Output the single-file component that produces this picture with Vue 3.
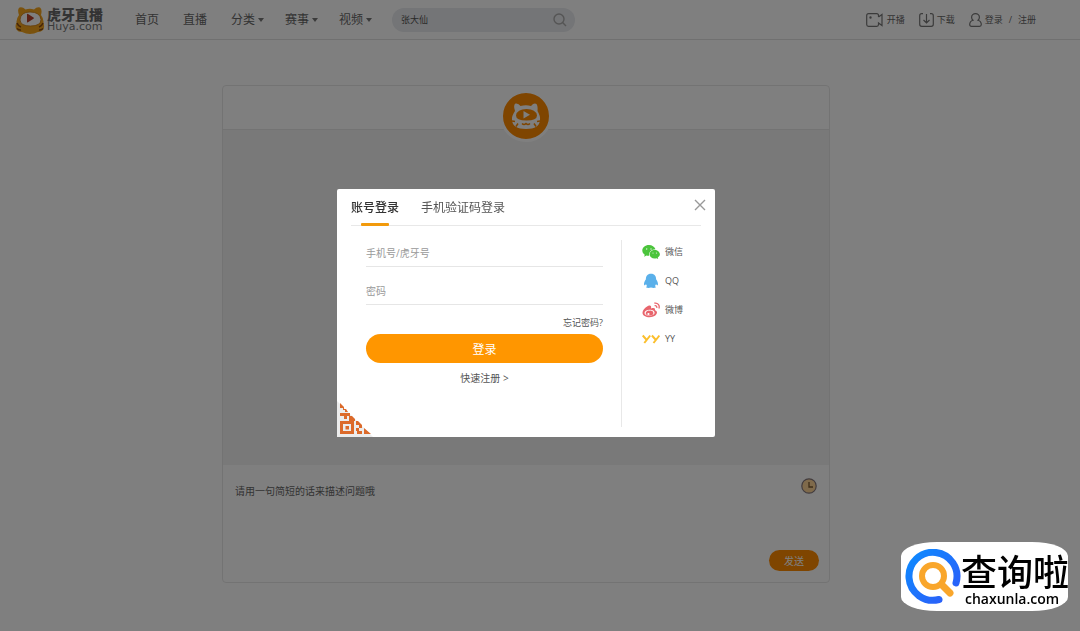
<template>
	<div class="page">
		<header class="header">
			<a class="logo" href="#">
				<svg class="logo-face" viewBox="0 0 30 28" aria-hidden="true">
					<path fill="#f5a51c" d="M4 9Q2 3 4.500 1.500Q7.500 .5 10.500 3.500Q15 2 19 3.500Q22 .5 25 1.500Q27.500 3 26 9Q29 13 28.500 17Q30 21 28 24Q26 26 23 26Q15 30 7 26Q3 26 1.500 23.500Q-.5 20 1.500 17Q1 13 4 9Z" />
					<path fill="#fff" stroke="#c97a14" stroke-width=".8" d="M5 14Q5.500 6 15 6Q25 6 26 13.500Q26 20 15.500 20Q5.500 20 5 14Z" />
					<path fill="#b8402a" d="M12 8.500Q12 7.500 13 8L18.500 11.500Q19.500 12 18.500 12.700L13 16.300Q12 16.800 12 15.800Z" />
					<path fill="none" stroke="#8a4b12" stroke-width="1.500" d="M2 17q1 3 4 4M2 22.500q2 2 4 1.500M28 17q-1 3 -4 4M28 22.500q-2 2 -4 1.500" />
				</svg>
				<span class="logo-text">
					<strong>虎牙直播</strong>
					<em>Huya.com</em>
				</span>
			</a>

			<nav class="nav">
				<a v-for="item in navItems" :key="item.name" href="#" :class="{ 'has-arrow': item.arrow }">{{ item.name }}</a>
			</nav>

			<form class="search" @submit.prevent>
				<input v-model="keyword" type="text" aria-label="搜索" placeholder="张大仙">
				<button type="submit" aria-label="搜索">
					<svg viewBox="0 0 14 14"><circle cx="6" cy="6" r="5" /><path d="M9.6 9.6 L13 13" /></svg>
				</button>
			</form>

			<div class="user-bar">
				<a href="#">
					<svg class="ico-video" viewBox="0 0 18 14">
						<path d="M12.5 4V2.5Q12.5 .7 10.7 .7H2.5Q.7 .7 .7 2.5V11.5Q.7 13.3 2.5 13.3H10.7Q12.5 13.3 12.5 11.5V10L16 12.5V1.5L12.5 4" />
						<circle cx="4.5" cy="4.5" r=".6" />
					</svg>
					开播
				</a>
				<a href="#">
					<svg class="ico-down" viewBox="0 0 15 14">
						<path d="M4 .7H2.7Q.7 .7 .7 2.7V11.3Q.7 13.3 2.7 13.3H12.3Q14.3 13.3 14.3 11.3V2.7Q14.3 .7 12.3 .7H11M7.5 1V10M4.5 7L7.5 10L10.5 7" />
					</svg>
					下载
				</a>
				<div class="login-links">
					<svg class="ico-user" viewBox="0 0 13 14">
						<path d="M4 7.2Q2.6 6 2.6 4.2A3.8 3.5 0 0 1 10.4 4.2Q10.4 6 9 7.2Q12.3 8.2 12.3 11.5Q12.3 13.3 10.5 13.3H2.5Q.7 13.3 .7 11.5Q.7 8.2 4 7.2Z" />
					</svg>
					<a href="#">登录</a>
					<span class="slash">/</span>
					<a href="#">注册</a>
				</div>
			</div>
		</header>

		<main class="main">
			<section class="chat">
				<div class="chat-head">
					<div class="avatar">
						<svg viewBox="0 0 30 28">
							<path fill="#fff" d="M4 9Q2 3 4.500 1.500Q7.500 1 9.500 4Q15 2.500 20 4Q23 .5 25.500 2Q27 4 26.500 9Q29.500 14 29 18Q28.500 27 15 27Q1.500 27 1 18Q.5 14 4 9Z" />
							<path fill="#ff8a00" d="M5 13.500Q6 7 15.500 7Q25 7 26 13.500Q26 18.500 15.500 18.500Q5 18.500 5 13.500Z" />
							<path fill="#fff" d="M12.500 9L19 12.800L12.500 16.500Z" />
							<path fill="none" stroke="#ff8a00" stroke-width="1.500" d="M1 19l3 .5M5 24.500l2 -3M29 19l-3 .5M25 24.500l-2 -3M11 21.500q2 2 4 0q2 2 4 0" />
						</svg>
					</div>
				</div>
				<div class="chat-body"></div>
				<form class="chat-input" @submit.prevent>
					<textarea v-model="question" aria-label="问题描述" placeholder="请用一句简短的话来描述问题哦"></textarea>
					<div class="chat-tools">
						<button class="history" type="button" aria-label="历史记录">
							<svg viewBox="0 0 16 16">
								<circle cx="8" cy="8" r="7.2" fill="#ffd596" stroke="#85787c" stroke-width="1.2" />
								<path d="M8 4V9H12" fill="none" stroke="#7b5a30" stroke-width="1.3" />
							</svg>
						</button>
						<button class="send" type="submit">发送</button>
					</div>
				</form>
			</section>
		</main>

		<div class="mask">
			<div class="dialog" role="dialog" aria-label="账号登录">
				<div class="tabs">
					<button v-for="( tab, i ) in tabs" :key="tab" type="button" :class="{ active: i === activeTab }"
						@click="activeTab = i">{{ tab }}</button>
					<button class="close" type="button" aria-label="关闭">
						<svg viewBox="0 0 12 12"><path d="M1 1L11 11M11 1L1 11" /></svg>
					</button>
				</div>

				<div class="dialog-body">
					<form class="login-form" @submit.prevent>
						<input v-model="account" type="text" aria-label="手机号/虎牙号" placeholder="手机号/虎牙号">
						<input v-model="password" type="password" aria-label="密码" placeholder="密码">
						<a class="forget" href="#">忘记密码?</a>
						<button class="login-btn" type="submit">登录</button>
						<a class="register" href="#">快速注册 &gt;</a>
					</form>

					<!-- Third-party login -->
					<div class="others">
						<a href="#">
							<svg viewBox="0 0 18 16">
								<path fill="#4bc43c" d="M7 1C3 1 .3 3.500 .3 6.500C.3 8.300 1.300 9.700 2.700 10.700L2.200 12.700L4.500 11.500C5.500 11.800 6.300 11.900 7.200 11.800C6.500 8.500 9 5.500 13.500 5.300C12.500 2.800 10 1 7 1Z" />
								<path fill="#4bc43c" d="M12.700 6C9.700 6 7.600 8 7.600 10.300C7.600 12.900 9.800 14.500 12.700 14.500C13.300 14.500 13.900 14.400 14.500 14.200L16.200 15.100L15.800 13.500C17.100 12.700 17.900 11.700 17.900 10.300C17.900 8 15.500 6 12.700 6Z" />
								<g fill="#e2f7df"><circle cx="4.700" cy="5" r=".7" /><circle cx="9" cy="5" r=".7" /><circle cx="11" cy="9" r=".6" /><circle cx="14.500" cy="9" r=".6" /></g>
							</svg>
							微信
						</a>
						<a href="#">
							<svg viewBox="0 0 18 16">
								<path fill="#5ab0ea" d="M9 .8C5.300 .8 3.800 3.400 3.900 6.300C2.500 8.300 1.700 10.500 2.100 12C2.700 12.600 3.500 11.700 4 10.900Q4.300 12.200 5.200 13Q3.800 13.600 4.200 14.600Q6.500 15.400 9 14.500Q11.500 15.400 13.800 14.600Q14.200 13.600 12.800 13Q13.700 12.200 14 10.900C14.500 11.700 15.300 12.600 15.900 12C16.300 10.500 15.500 8.300 14.100 6.300C14.200 3.400 12.700 .8 9 .8Z" />
							</svg>
							QQ
						</a>
						<a href="#">
							<svg viewBox="0 0 18 16">
								<path fill="#e8656d" fill-rule="evenodd" d="M7 3.500C4 4.500 .5 8 .5 10.700C.5 13.500 3.800 15.200 7.500 15.200C12 15.200 15 12.600 15 10.500C15 9.200 13.900 8.500 12.900 8.200C13.500 6.200 12.200 5.400 9 6.500C9.500 4.500 9 3.200 7 3.500ZM7.400 7.800C10.300 7.500 12.500 8.900 12.600 10.800C12.600 12.500 10.300 13.700 7.700 13.800C4.900 13.900 2.600 12.700 2.500 10.900C2.400 9.200 4.600 8 7.400 7.800Z" />
								<path fill="#e8656d" fill-rule="evenodd" d="M7.500 8.700A3 2.500 0 1 0 7.600 13.500A3 2.500 0 1 0 7.500 8.700ZM6.500 11A1.100 1 0 1 1 6.400 13A1.100 1 0 1 1 6.500 11Z" />
								<path fill="none" stroke="#e8656d" stroke-width="1.300" d="M12.300 1.200C15.800 .4 18 3.300 16.900 6.500M12.600 3.700C14.200 3.300 15.100 4.500 14.700 5.900" />
							</svg>
							微博
						</a>
						<a href="#">
							<svg viewBox="0 0 18 16">
								<path fill="none" stroke="#fbbf2d" stroke-width="2" d="M.7 4.500L4.300 8.500M8.200 4.500L2.300 12M9.900 4.500L13.500 8.500M17.400 4.500L11.500 12" />
							</svg>
							YY
						</a>
					</div>
				</div>

				<!-- QR code corner -->
				<svg class="qr" viewBox="0 0 36 36">
					<path fill="#ececec" d="M0 0L36 36H0Z" />
					<path fill="#dc6a2a" fill-rule="evenodd" d="M3 2L7 6V8H9L11 11H8V9H6V7H3ZM3 12H13V15H10V18H7V15H3ZM12 15H15L18 18V20H12ZM3 20H17V33H3ZM6 23V30H14V23ZM8.500 25H12V28.500H8.500ZM19 20H21L25 24V27H22V24H19ZM19 27H22V30H25V33H20V30H19ZM27 27L34 33H27Z" />
				</svg>
			</div>
		</div>

		<div class="watermark">
			<svg viewBox="0 0 56 56">
				<defs>
					<linearGradient id="ring" x1="0" y1="0" x2="1" y2="1">
						<stop offset="0" stop-color="#0d8bff" />
						<stop offset="1" stop-color="#2e5bf8" />
					</linearGradient>
				</defs>
				<path fill="none" stroke="url(#ring)" stroke-width="7" stroke-linecap="round" d="M51 34A24 24 0 1 0 34 50.500" />
				<circle cx="28" cy="27" r="11" fill="none" stroke="#f9a62b" stroke-width="6" />
				<path d="M37 36L45 44" stroke="#f9a62b" stroke-width="7" stroke-linecap="round" />
			</svg>
			<div class="watermark-text">
				<strong>查询啦</strong>
				<span>chaxunla.com</span>
			</div>
		</div>
	</div>
</template>

<script setup>
import { ref } from 'vue'

const navItems = [
	{ name: '首页' },
	{ name: '直播' },
	{ name: '分类', arrow: true },
	{ name: '赛事', arrow: true },
	{ name: '视频', arrow: true }
]
const tabs = [ '账号登录', '手机验证码登录' ]

const activeTab = ref( 0 )
const keyword = ref( '' )
const question = ref( '' )
const account = ref( '' )
const password = ref( '' )
</script>

<style>
body {
	margin: 0;
	background: #fff;
}
</style>

<style scoped>
.page {
	min-height: 100vh;
	font-family: "Open Sans", "Noto Sans CJK SC", sans-serif;
	font-size: 12px;
	color: #666;
}

.page * {
	box-sizing: border-box;
}

a {
	color: inherit;
	text-decoration: none;
}

button {
	padding: 0;
	border: 0;
	background: none;
	font-family: inherit;
	color: inherit;
	cursor: pointer;
}

input,
textarea {
	padding: 0;
	border: 0;
	outline: 0;
	background: none;
	font-family: inherit;
	color: #333;
}

svg {
	display: block;
	flex: none;
}

/* HEADER */
.header {
	display: flex;
	align-items: center;
	height: 40px;
	padding: 0 44px 0 15px;
	border-bottom: 1px solid #e0e0e0;
}

.logo {
	display: flex;
	align-items: center;
	gap: 2px;
	width: 108px;
}

.logo-face {
	width: 30px;
	height: 28px;
}

.logo-text strong,
.logo-text em {
	display: block;
}

.logo-text strong {
	font-size: 14px;
	line-height: 14px;
	font-weight: 900;
}

.logo-text em {
	font: 11px/9px "DejaVu Sans", sans-serif;
	color: #777;
}

.nav {
	display: flex;
}

.nav a {
	padding: 0 12px;
	line-height: 20px;
}

.nav .has-arrow {
	display: flex;
	align-items: center;
	gap: 3px;
	padding-right: 9px;
}

.has-arrow::after {
	content: "";
	border: 3px solid transparent;
	border-top: 4px solid #777;
	border-bottom: 0;
}

.search {
	display: flex;
	align-items: center;
	width: 183px;
	height: 24px;
	margin-left: 11px;
	padding: 0 8px 0 9px;
	border-radius: 12px;
	background: #e8eaee;
}

.search input {
	flex: 1;
	min-width: 0;
	font-size: 9px;
}

.search input::placeholder {
	color: #555;
	opacity: 1;
}

.search svg {
	width: 14px;
	height: 14px;
	fill: none;
	stroke: #aaa;
	stroke-width: 1.4;
}

.user-bar {
	display: flex;
	gap: 14px;
	margin-left: auto;
	font-size: 9px;
	line-height: 16px;
}

.user-bar > * {
	display: flex;
	align-items: center;
	gap: 3px;
}

.user-bar svg {
	height: 14px;
	fill: none;
	stroke: #777;
	stroke-width: 1.2;
}

.ico-video {
	width: 18px;
}

.ico-down {
	width: 15px;
}

.ico-user {
	width: 13px;
}

.slash {
	padding: 0 3px;
}

/* CHAT */
.main {
	padding: 45px 28px 48px 0;
}

.chat {
	max-width: 608px;
	margin: 0 auto;
	border: 1px solid #e6e6e6;
	border-radius: 4px;
}

.chat-head {
	display: flex;
	justify-content: center;
	height: 43px;
}

.avatar {
	display: flex;
	align-items: center;
	justify-content: center;
	width: 52px;
	height: 52px;
	margin-top: 4px;
	border: 3px solid #fff;
	border-radius: 50%;
	background: #ff8a00;
	z-index: 1;
}

.avatar svg {
	width: 30px;
	height: 28px;
}

.chat-body {
	height: 336px;
	border-top: 1px solid #e6e6e6;
	background: #f2f2f2;
}

.chat-input {
	display: flex;
	height: 117px;
	padding: 13px 10px 11px 12px;
}

.chat-input textarea {
	flex: 1;
	padding-top: 6px;
	resize: none;
	font-size: 10px;
	line-height: 14px;
}

.chat-input textarea::placeholder {
	color: #666;
	opacity: 1;
}

.chat-tools {
	display: flex;
	flex-direction: column;
	align-items: flex-end;
	justify-content: space-between;
}

.history {
	margin-right: 2px;
}

.history svg {
	width: 16px;
	height: 16px;
}

.send {
	width: 50px;
	height: 21px;
	border-radius: 11px;
	background: #ff8a00;
	color: #fff;
	font-size: 10px;
}

/* LOGIN DIALOG */
.mask {
	position: fixed;
	inset: 0;
	z-index: 10;
	display: flex;
	align-items: center;
	justify-content: center;
	padding: 0 28px 5px 0;
	background: rgba(0, 0, 0, .5);
	color: #555;
}

.dialog {
	position: relative;
	width: 378px;
	height: 248px;
	padding: 0 14px;
	border-radius: 2px;
	background: #fff;
}

.tabs {
	display: flex;
	align-items: stretch;
	gap: 22px;
	height: 37px;
	border-bottom: 1px solid #e8e8e8;
}

.tabs button {
	position: relative;
	font-size: 12px;
}

.tabs .active {
	font-weight: 500;
	color: #333;
}

.tabs .active::after {
	content: "";
	position: absolute;
	left: 10px;
	right: 10px;
	bottom: -1px;
	height: 3px;
	border-radius: 1px;
	background: #f29a0c;
}

.tabs .close {
	margin: 0 -5px 4px auto;
}

.close svg {
	width: 12px;
	height: 12px;
	stroke: #999;
	stroke-width: 1.4;
}

.dialog-body {
	display: flex;
	padding-top: 14px;
}

.login-form {
	display: flex;
	flex: 1;
	flex-direction: column;
	padding: 0 18px 0 15px;
}

.login-form input {
	height: 27px;
	margin-bottom: 11px;
	border-bottom: 1px solid #e6e6e6;
	font-size: 10px;
}

.login-form input::placeholder {
	color: #999;
	opacity: 1;
}

.forget {
	align-self: flex-end;
	font-size: 9px;
	line-height: 14px;
}

.login-btn {
	height: 29px;
	margin: 4px 0 8px;
	border-radius: 15px;
	background: #ff9600;
	color: #fff;
	font-size: 12px;
}

.register {
	align-self: center;
	font-size: 10px;
	line-height: 14px;
}

.others {
	display: flex;
	flex-direction: column;
	gap: 13px;
	width: 80px;
	height: 187px;
	padding: 4px 0 0 20px;
	border-left: 1px solid #e8e8e8;
}

.others a {
	display: flex;
	align-items: center;
	gap: 5px;
	font-size: 9px;
	line-height: 16px;
}

.others svg {
	width: 18px;
	height: 16px;
}

.qr {
	position: absolute;
	left: 0;
	bottom: 0;
	width: 36px;
	height: 36px;
}

/* WATERMARK */
.watermark {
	position: fixed;
	right: 12px;
	bottom: 20px;
	z-index: 20;
	display: flex;
	align-items: center;
	width: 167px;
	height: 69px;
	padding-left: 4px;
	border-radius: 36px / 14px;
	background: #fff;
	color: #000;
}

.watermark svg {
	width: 56px;
	height: 56px;
}

.watermark-text {
	padding-top: 6px;
}

.watermark-text strong {
	display: block;
	font-size: 36px;
	line-height: 38px;
	font-weight: 500;
	white-space: nowrap;
}

.watermark-text span {
	display: block;
	padding-left: 4px;
	font: 600 14px/14px "Open Sans", sans-serif;
}
</style>
